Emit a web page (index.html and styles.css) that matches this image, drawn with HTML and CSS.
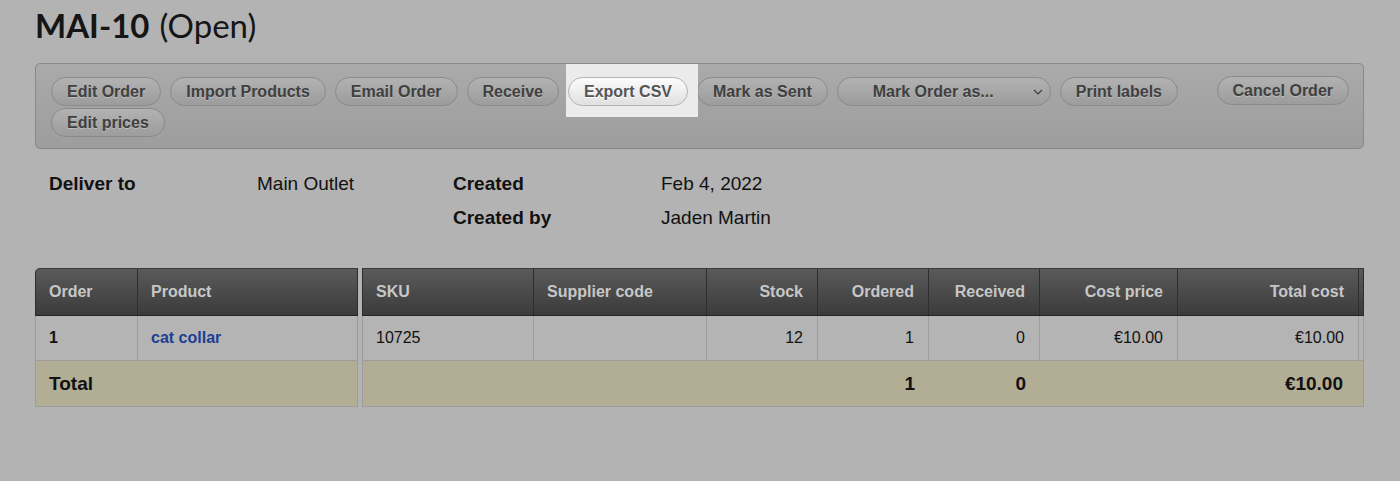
FILE: index.html
```html
<!DOCTYPE html>
<html lang="en">
<head>
<meta charset="utf-8">
<title>MAI-10 (Open)</title>
<link rel="stylesheet" href="styles.css">
</head>
<body>
<div class="page">
  <h1 class="title"><span class="code">MAI-10</span><span class="status">(Open)</span></h1>

  <div class="toolbar">
    <div class="actions">
      <button class="btn">Edit Order</button>
      <button class="btn">Import Products</button>
      <button class="btn">Email Order</button>
      <button class="btn">Receive</button>
      <span class="spot"><button class="btn btn-lit">Export CSV</button></span>
      <button class="btn">Mark as Sent</button>
      <div class="btn select"><span>Mark Order as...</span><svg class="chev" width="10" height="6" viewBox="0 0 10 6"><path d="M1 1l4 4 4-4" fill="none" stroke="#3a3a3a" stroke-width="1.1"/></svg></div>
      <button class="btn">Print labels</button>
      <button class="btn">Edit prices</button>
    </div>
    <button class="btn cancel">Cancel Order</button>
  </div>

  <div class="details">
    <div class="label">Deliver to</div>
    <div class="value">Main Outlet</div>
    <div class="label">Created</div>
    <div class="value">Feb 4, 2022</div>
    <div></div>
    <div></div>
    <div class="label">Created by</div>
    <div class="value">Jaden Martin</div>
  </div>

  <div class="grid">
    <table class="t-left">
      <colgroup><col class="w-order"><col class="w-product"></colgroup>
      <thead>
        <tr><th class="first">Order</th><th>Product</th></tr>
      </thead>
      <tbody>
        <tr class="row"><td class="first strong">1</td><td><a class="link" href="#">cat collar</a></td></tr>
        <tr class="total"><td class="first end" colspan="2">Total</td></tr>
      </tbody>
    </table>
    <table class="t-right">
      <colgroup><col class="w-sku"><col class="w-supp"><col class="w-stock"><col class="w-ord"><col class="w-rec"><col class="w-cost"><col class="w-total"><col class="w-extra"></colgroup>
      <thead>
        <tr>
          <th class="first">SKU</th><th>Supplier code</th><th class="num">Stock</th><th class="num">Ordered</th><th class="num">Received</th><th class="num">Cost price</th><th class="num">Total cost</th><th class="extra"></th>
        </tr>
      </thead>
      <tbody>
        <tr class="row"><td class="first">10725</td><td></td><td class="num">12</td><td class="num">1</td><td class="num">0</td><td class="num">€10.00</td><td class="num">€10.00</td><td class="extra"></td></tr>
        <tr class="total"><td class="first" colspan="3"></td><td class="num">1</td><td class="num">0</td><td></td><td class="num last end" colspan="2">€10.00</td></tr>
      </tbody>
    </table>
  </div>
</div>
</body>
</html>
```

FILE: styles.css
```css
body {
  margin: 0;
  background: #b3b3b3;
  font-family: "Liberation Sans", Arial, sans-serif;
  color: #111;
}

.page {
  padding: 0 36px 0 35px;
}

.title {
  margin: 7px 0 20px;
  font-family: Lato, "Open Sans", sans-serif;
  font-size: 33px;
  line-height: 36px;
  font-weight: 400;
  color: #151515;
}

.title .code {
  font-weight: 700;
}

.title .status {
  margin-left: 10px;
}

/* toolbar */
.toolbar {
  display: flex;
  align-items: flex-start;
  border: 1px solid #898989;
  border-radius: 5px;
  background: linear-gradient(#aaaaaa, #9d9d9d);
  padding: 13px 14px 11px 15px;
}

.actions {
  flex: 1;
  display: flex;
  flex-wrap: wrap;
  gap: 2px 9px;
}

.btn {
  box-sizing: border-box;
  height: 29px;
  margin: 0;
  padding: 0 15px;
  border: 1px solid #8a8a8a;
  border-radius: 15px;
  background: linear-gradient(#b2b2b2, #9c9c9c);
  font: bold 16px/27px "Liberation Sans", Arial, sans-serif;
  color: #404040;
  text-shadow: 0 1px 0 #bcbcbc;
  white-space: nowrap;
}

.spot {
  position: relative;
  z-index: 0;
  display: flex;
}

.spot::before {
  content: "";
  position: absolute;
  top: -13px;
  right: -10px;
  bottom: -11px;
  left: -2px;
  background: #ebebeb;
  z-index: -1;
}

.btn-lit {
  background: linear-gradient(#fcfcfc, #e0e0e0);
  border-color: #b3b3b3;
  color: #555;
  text-shadow: 0 1px 0 #fff;
}

.select {
  width: 214px;
  display: flex;
  align-items: center;
  padding: 0 7px 0 35px;
}

.select .chev {
  margin-left: auto;
}

.cancel {
  margin-top: -1px;
  margin-left: 9px;
}

/* details */
.details {
  display: grid;
  grid-template-columns: 208px 196px 208px 1fr;
  grid-auto-rows: 34px;
  margin-top: 18px;
  padding-left: 14px;
  font-size: 19px;
  line-height: 34px;
}

.details .label {
  font-weight: bold;
}

/* tables */
.grid {
  display: flex;
  gap: 4px;
  margin-top: 33px;
  font-size: 16px;
}

table {
  border-collapse: separate;
  border-spacing: 0;
  table-layout: fixed;
}

.t-left { width: 323px; }
.t-right { width: 1002px; }

.w-order { width: 103px; }
.w-product { width: 220px; }
.w-sku { width: 172px; }
.w-supp { width: 173px; }
.w-stock { width: 111px; }
.w-ord { width: 111px; }
.w-rec { width: 111px; }
.w-cost { width: 138px; }
.w-total { width: 181px; }
.w-extra { width: 5px; }

th {
  height: 48px;
  box-sizing: border-box;
  padding: 0 13px;
  background: linear-gradient(#5a5a5a, #3b3b3b);
  color: #c7c7c7;
  font-weight: bold;
  text-align: left;
  border-right: 1px solid #2e2e2e;
  border-bottom: 1px solid #222;
  border-top: 1px solid #3a3a3a;
}

th.first {
  border-left: 1px solid #2e2e2e;
}

.t-left th.first {
  border-top-left-radius: 5px;
}

td {
  box-sizing: border-box;
  padding: 0 13px;
  border-right: 1px solid #9c9c9c;
  border-bottom: 1px solid #9c9c9c;
  white-space: nowrap;
}

td.first {
  border-left: 1px solid #9c9c9c;
}

.row td {
  height: 45px;
  background: #b4b4b4;
}

.total td {
  height: 46px;
  background: #b2ad95;
  font-weight: bold;
  font-size: 19px;
  border-right: 0;
}

.total td.end {
  border-right: 1px solid #9c9c9c;
}

th.num,
td.num {
  text-align: right;
  padding-right: 14px;
}

th.extra,
td.extra {
  padding: 0;
}

.total td.last {
  padding-right: 20px;
}

.strong {
  font-weight: bold;
}

.link {
  color: #1c3f93;
  font-weight: bold;
  text-decoration: none;
}
```
